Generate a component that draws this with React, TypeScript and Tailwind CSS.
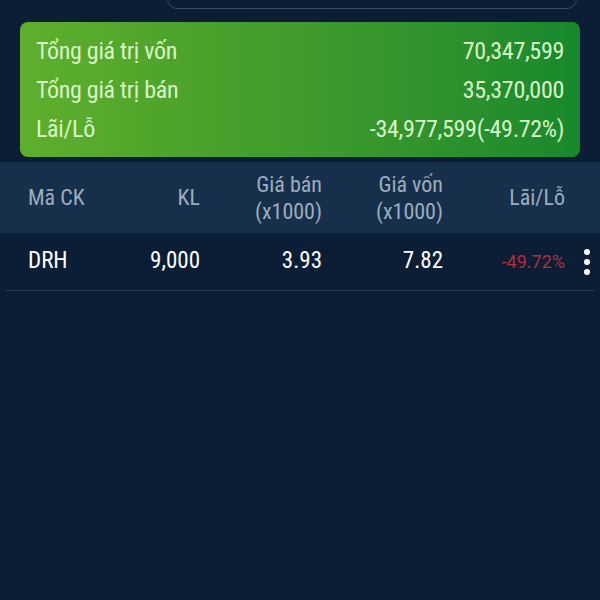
const summary = [
  { label: "Tổng giá trị vốn", value: "70,347,599" },
  { label: "Tổng giá trị bán", value: "35,370,000" },
  { label: "Lãi/Lỗ", value: "-34,977,599(-49.72%)" },
];

const cols = "grid grid-cols-[52px_120px_122px_121px_122px_1fr] items-center pl-[28px] whitespace-nowrap";

export default function App() {
  return (
    <div className="w-[600px] h-[600px] overflow-hidden bg-[#0b1e36] font-['Roboto_Condensed','Liberation_Sans_Narrow',Roboto,sans-serif]">
      {/* search box cut off at the top */}
      <div className="h-[40px] -mt-[31px] ml-[167px] mr-[23px] border border-[#3b4b60] rounded-[10px]" />

      <div className="mx-5 mt-[13px] h-[135px] rounded-lg bg-gradient-to-r from-[#5eaf2b] to-[#16892c] px-4 pt-[9px] pb-[8px] text-[24px] tracking-[-0.3px] text-[#d9f5c9]">
        {summary.map((row) => (
          <div key={row.label} className="flex h-[39px] items-center justify-between">
            <span>{row.label}</span>
            <span>{row.value}</span>
          </div>
        ))}
      </div>

      <div className={`${cols} mt-[5px] h-[71px] bg-[#16304c] text-[22px] leading-[27px] text-[#9eacbc]`}>
        <div>Mã CK</div>
        <div className="text-right">KL</div>
        <div className="text-right">Giá bán<br />(x1000)</div>
        <div className="text-right">Giá vốn<br />(x1000)</div>
        <div className="text-right">Lãi/Lỗ</div>
        <div />
      </div>

      <div className={`${cols} h-[57px] text-[23px] text-white`}>
        <div>DRH</div>
        <div className="text-right">9,000</div>
        <div className="text-right">3.93</div>
        <div className="text-right">7.82</div>
        <div className="text-right font-['Roboto',sans-serif] text-[18px] text-[#b3303a]">-49.72%</div>
        <div className="flex flex-col items-center gap-[4px] pl-[9px]">
          <span className="h-[6px] w-[6px] rounded-full bg-white" />
          <span className="h-[6px] w-[6px] rounded-full bg-white" />
          <span className="h-[6px] w-[6px] rounded-full bg-white" />
        </div>
      </div>
      <div className="mx-[6px] h-px bg-[#2a3d53]" />
    </div>
  );
}
